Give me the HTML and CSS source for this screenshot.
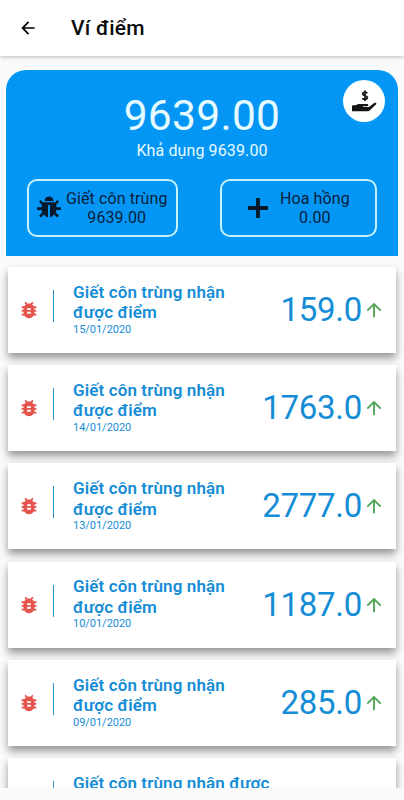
FILE: index.html
```
<!DOCTYPE html>
<html lang="vi">
<head>
<meta charset="utf-8">
<title>Ví điểm</title>
<link rel="stylesheet" href="styles.css">
</head>
<body>
<svg width="0" height="0" class="defs">
  <symbol id="bug" viewBox="0 0 24 24"><path d="M20 8h-2.81c-.45-.78-1.07-1.45-1.82-1.96L17 4.41 15.59 3l-2.17 2.17C12.96 5.06 12.49 5 12 5s-.96.06-1.41.17L8.41 3 7 4.41l1.62 1.63C7.88 6.55 7.26 7.22 6.81 8H4v2h2.09c-.05.33-.09.66-.09 1v1H4v2h2v1c0 .34.04.67.09 1H4v2h2.81c1.04 1.79 2.97 3 5.19 3s4.15-1.21 5.19-3H20v-2h-2.09c.05-.33.09-.66.09-1v-1h2v-2h-2v-1c0-.34-.04-.67-.09-1H20V8zm-6 8h-4v-2h4v2zm0-4h-4v-2h4v2z"/></symbol>
  <symbol id="up" viewBox="0 0 24 24"><path d="M4 12l1.41 1.41L11 7.83V20h2V7.83l5.58 5.59L20 12l-8-8-8 8z"/></symbol>
</svg>
<header class="bar">
  <svg class="back" viewBox="0 0 24 24"><path d="M20 11H7.83l5.59-5.59L12 4l-8 8 8 8 1.41-1.41L7.83 13H20v-2z"/></svg>
  <h1>Ví điểm</h1>
</header>
<main>
  <section class="wallet">
    <div class="total">9639.00</div>
    <div class="avail">Khả dụng 9639.00</div>
    <div class="withdraw">
      <svg viewBox="0 0 26 26"><path d="M1 18.200q0-1 1-1h2.500q2-1.200 4-1.200h7.500c1.800 0 1.800 2.200 0 2.200h-4v.8h6l5.200-4c1.500-1 2.900.2 1.700 1.500l-6.300 6c-.5.500-1 .7-1.800.7H1z"/><path class="dollar" d="M16.300 5.300C15.400 3.800 11.700 3.800 11.700 6c0 2.300 4.700 1.200 4.700 3.600 0 2.200-3.900 2.200-5 .6M14 2.500v10.500"/></svg>
    </div>
    <div class="sources">
      <div class="source kill">
        <svg class="beetle" viewBox="0 0 24 24"><path d="M7.500 5a4.500 4.500 0 0 1 9 0z"/><path d="M5.500 6.200h13l1.700-2.200 1.800 1.500-2.700 3.200v2.600H24v2.600h-4.700c0 1-.2 1.700-.5 2.500l3.200 3.400-1.800 1.800-3-3A7 7 0 0 1 13 21.400V9h-2v12.400a7 7 0 0 1-4.200-2.800l-3 3L2 19.800l3.200-3.400a7 7 0 0 1-.5-2.500H0v-2.600h4.700V8.700L2 5.500 3.800 4z"/></svg>
        <div>Giết côn trùng<br>9639.00</div>
      </div>
      <div class="source bonus">
        <svg class="plus" viewBox="0 0 20 20"><path d="M10 0v20M0 10h20"/></svg>
        <div>Hoa hồng<br>0.00</div>
      </div>
    </div>
  </section>
  <div class="list">
    <article class="card"><svg class="bug"><use href="#bug"/></svg><i class="rule"></i><div class="info"><h2>Giết côn trùng nhận được điểm</h2><time>15/01/2020</time></div><b class="pts">159.0</b><svg class="up"><use href="#up"/></svg></article>
    <article class="card"><svg class="bug"><use href="#bug"/></svg><i class="rule"></i><div class="info"><h2>Giết côn trùng nhận được điểm</h2><time>14/01/2020</time></div><b class="pts">1763.0</b><svg class="up"><use href="#up"/></svg></article>
    <article class="card"><svg class="bug"><use href="#bug"/></svg><i class="rule"></i><div class="info"><h2>Giết côn trùng nhận được điểm</h2><time>13/01/2020</time></div><b class="pts">2777.0</b><svg class="up"><use href="#up"/></svg></article>
    <article class="card"><svg class="bug"><use href="#bug"/></svg><i class="rule"></i><div class="info"><h2>Giết côn trùng nhận được điểm</h2><time>10/01/2020</time></div><b class="pts">1187.0</b><svg class="up"><use href="#up"/></svg></article>
    <article class="card"><svg class="bug"><use href="#bug"/></svg><i class="rule"></i><div class="info"><h2>Giết côn trùng nhận được điểm</h2><time>09/01/2020</time></div><b class="pts">285.0</b><svg class="up"><use href="#up"/></svg></article>
    <article class="card last"><svg class="bug"><use href="#bug"/></svg><i class="rule"></i><div class="info"><h2>Giết côn trùng nhận được</h2></div></article>
  </div>
</main>
</body>
</html>
```
FILE: styles.css
```
* { box-sizing: border-box; }
body {
  margin: 0;
  height: 800px;
  overflow: hidden;
  background: #fafafa;
  font-family: Roboto, "Liberation Sans", sans-serif;
  display: flex;
  flex-direction: column;
}
.defs { display: none; }
h1, h2 { margin: 0; font-weight: 500; }
svg { display: block; flex: none; }
.bar {
  height: 56px;
  flex: none;
  display: flex;
  align-items: center;
  padding-left: 18px;
  background: #fff;
  box-shadow: 0 1px 4px rgba(0, 0, 0, .25);
}
.back { width: 20px; height: 20px; }
.bar h1 { margin-left: 33px; font-size: 21px; line-height: 56px; letter-spacing: .25px; color: #0a0a0a; }
main {
  height: 732px;
  overflow: hidden;
  padding: 14px 6px 0;
}
.wallet {
  position: relative;
  height: 186px;
  padding: 21px 21px 0;
  border-radius: 20px 20px 0 0;
  background: #0496f5;
  text-align: center;
  color: #e6fbff;
}
.total { font-size: 42.500px; line-height: 50px; letter-spacing: .3px; }
.avail { font-size: 16px; line-height: 20px; letter-spacing: .12px; }
.withdraw {
  position: absolute;
  top: 10px;
  right: 13px;
  width: 42px;
  height: 42px;
  border-radius: 50%;
  background: #fff;
  display: flex;
  align-items: center;
  justify-content: center;
}
.withdraw svg { width: 26px; height: 26px; fill: #151515; }
.withdraw .dollar { fill: none; stroke: #151515; stroke-width: 1.7; }
.sources { display: flex; justify-content: space-between; margin-top: 18px; }
.source {
  height: 58px;
  border: 2px solid #c5f1ff;
  border-radius: 10px;
  display: flex;
  align-items: center;
  font-size: 16px;
  line-height: 19px;
  color: #08213c;
}
.kill { width: 151px; padding-left: 8px; gap: 5px; letter-spacing: .1px; }
.bonus { width: 157px; padding-left: 26px; gap: 12px; letter-spacing: .1px; }
.beetle { width: 24px; height: 24px; fill: #06182b; }
.plus { width: 20px; height: 20px; fill: none; stroke: #06182b; stroke-width: 3.8; }
.list {
  padding: 11px 2px 0;
}
.card {
  height: 86px;
  margin-bottom: 12.200px;
  display: flex;
  background: #fff;
  box-shadow: 0 5px 8px rgba(0, 0, 0, .4);
}
.bug { width: 22px; height: 22px; margin: 32px 0 0 10px; fill: #e5534d; }
.rule { width: 1px; height: 32px; margin: 23px 0 0 13px; background: #2c93cd; }
.info { width: 170px; margin: 14.800px 0 0 19px; color: #148dd6; }
.info h2 { font-size: 17px; font-weight: 600; line-height: 20.500px; letter-spacing: .12px; }
.info time { display: block; font-size: 11px; line-height: 13px; letter-spacing: -.03px; }
.pts {
  flex: 1;
  text-align: right;
  font-size: 33px;
  letter-spacing: -.3px;
  line-height: 86px;
  font-weight: 400;
  color: #148dd6;
}
.up { width: 22px; height: 22px; margin: 32px 11px 0 1px; fill: #4fa553; }
.last .info { width: 220px; }
.last .bug { visibility: hidden; }
```
